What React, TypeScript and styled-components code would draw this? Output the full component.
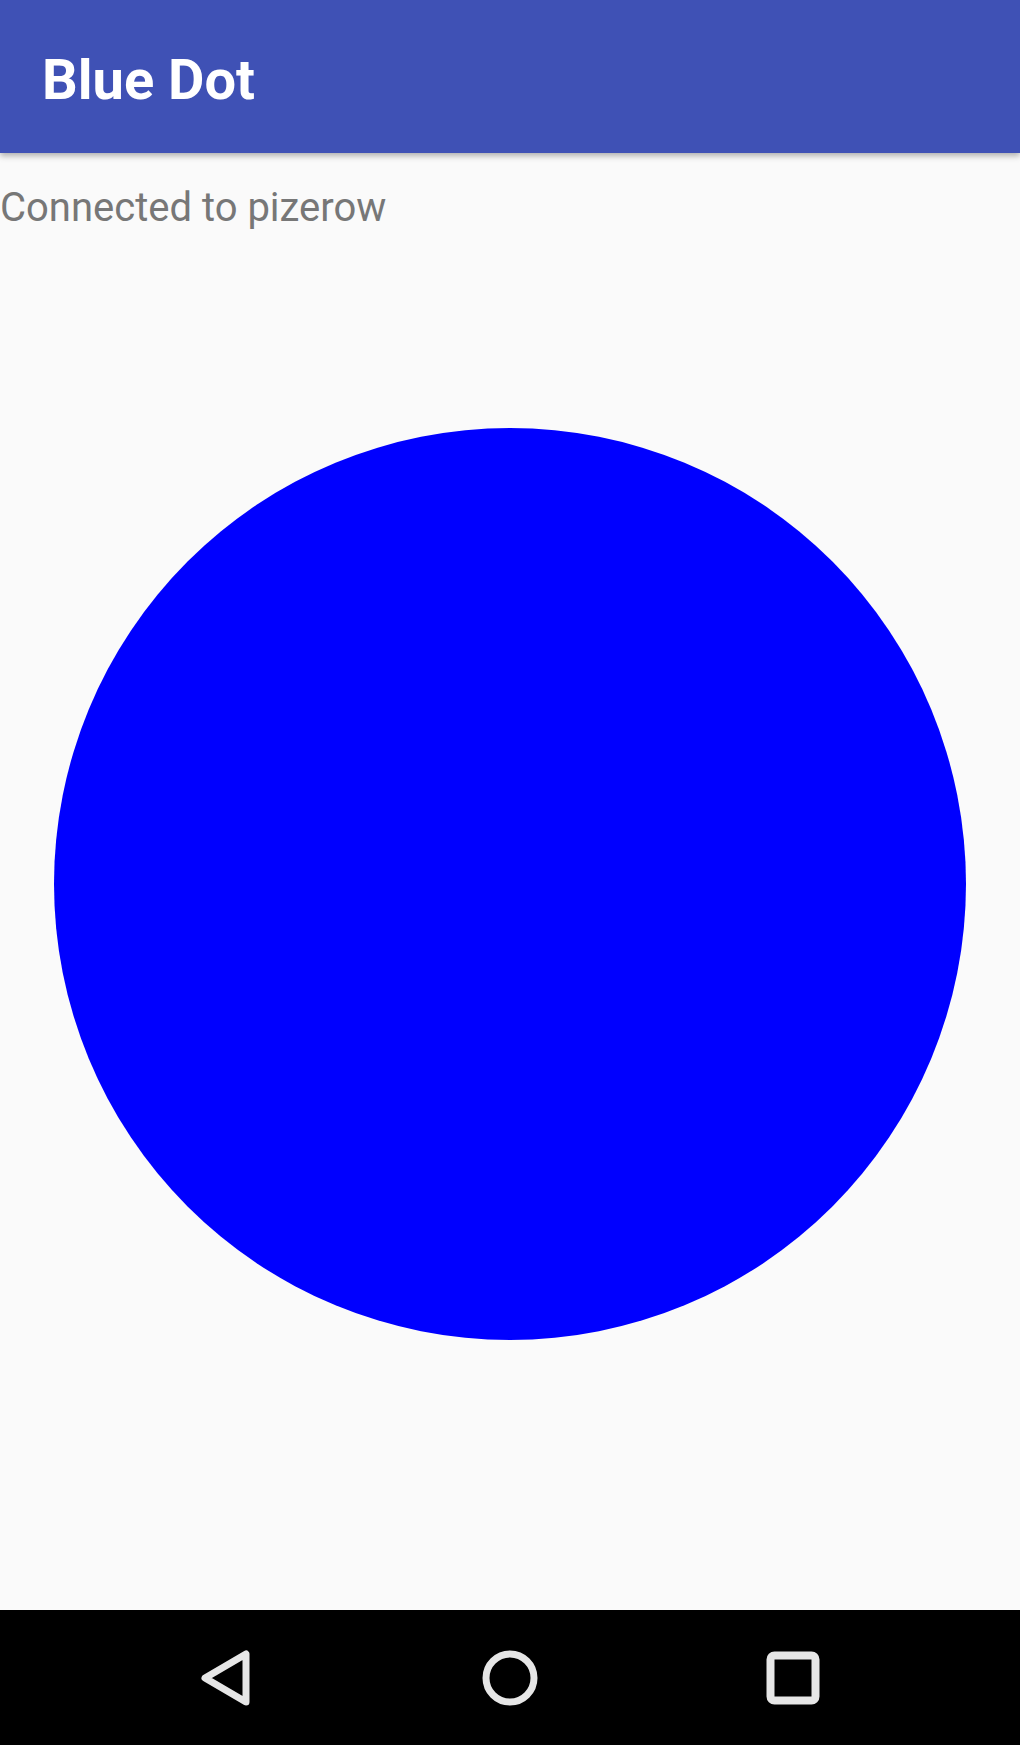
import React from "react";
import styled, { createGlobalStyle } from "styled-components";

const Global = createGlobalStyle`
  html, body { margin: 0; padding: 0; background: #fafafa; }
  #root { height: 1745px; }
`;

const Screen = styled.div`
  width: 1020px;
  height: 1745px;
  display: flex;
  flex-direction: column;
  overflow: hidden;
  font-family: Roboto, "Liberation Sans", sans-serif;
`;

const AppBar = styled.header`
  height: 153px;
  flex: none;
  background: #3f51b5;
  display: flex;
  align-items: center;
  padding-left: 42px;
  box-shadow: 0 3px 6px rgba(0, 0, 0, 0.3);
  position: relative;
  z-index: 1;
`;

const Title = styled.h1`
  margin: 0;
  color: #ffffff;
  font-size: 56px;
  font-weight: 700;
  margin-top: 6px;
`;

const Content = styled.main`
  flex: 1;
  background: #fafafa;
  display: flex;
  flex-direction: column;
`;

const Status = styled.div`
  padding-top: 32px;
  font-size: 40px;
  color: #777777;
  line-height: 46px;
`;

const DotArea = styled.div`
  display: flex;
  justify-content: center;
  padding-top: 197px;
`;

const Dot = styled.div`
  width: 912px;
  height: 912px;
  border-radius: 50%;
  background: #0000ff;
`;

const NavBar = styled.nav`
  height: 135px;
  flex: none;
  background: #000000;
  display: flex;
  justify-content: center;
  align-items: center;
`;

const NavSlot = styled.div`
  width: 283px;
  display: flex;
  justify-content: center;
  align-items: center;
`;

export default function App() {
  return (
    <>
      <Global />
      <Screen>
        <AppBar>
          <Title>Blue Dot</Title>
        </AppBar>
        <Content>
          <Status>Connected to pizerow</Status>
          <DotArea>
            <Dot />
          </DotArea>
        </Content>
        <NavBar>
          <NavSlot>
            <svg width="56" height="60" viewBox="0 0 56 60">
              <path
                d="M6 30 L47 6 L47 54 Z"
                fill="none"
                stroke="#e6e6e6"
                strokeWidth="7"
                strokeLinejoin="round"
              />
            </svg>
          </NavSlot>
          <NavSlot>
            <svg width="60" height="60" viewBox="0 0 60 60">
              <circle cx="30" cy="30" r="24" fill="none" stroke="#e6e6e6" strokeWidth="7" />
            </svg>
          </NavSlot>
          <NavSlot>
            <svg width="56" height="56" viewBox="0 0 56 56">
              <rect
                x="5.5"
                y="5.5"
                width="45"
                height="45"
                rx="4"
                fill="none"
                stroke="#e6e6e6"
                strokeWidth="8"
              />
            </svg>
          </NavSlot>
        </NavBar>
      </Screen>
    </>
  );
}
